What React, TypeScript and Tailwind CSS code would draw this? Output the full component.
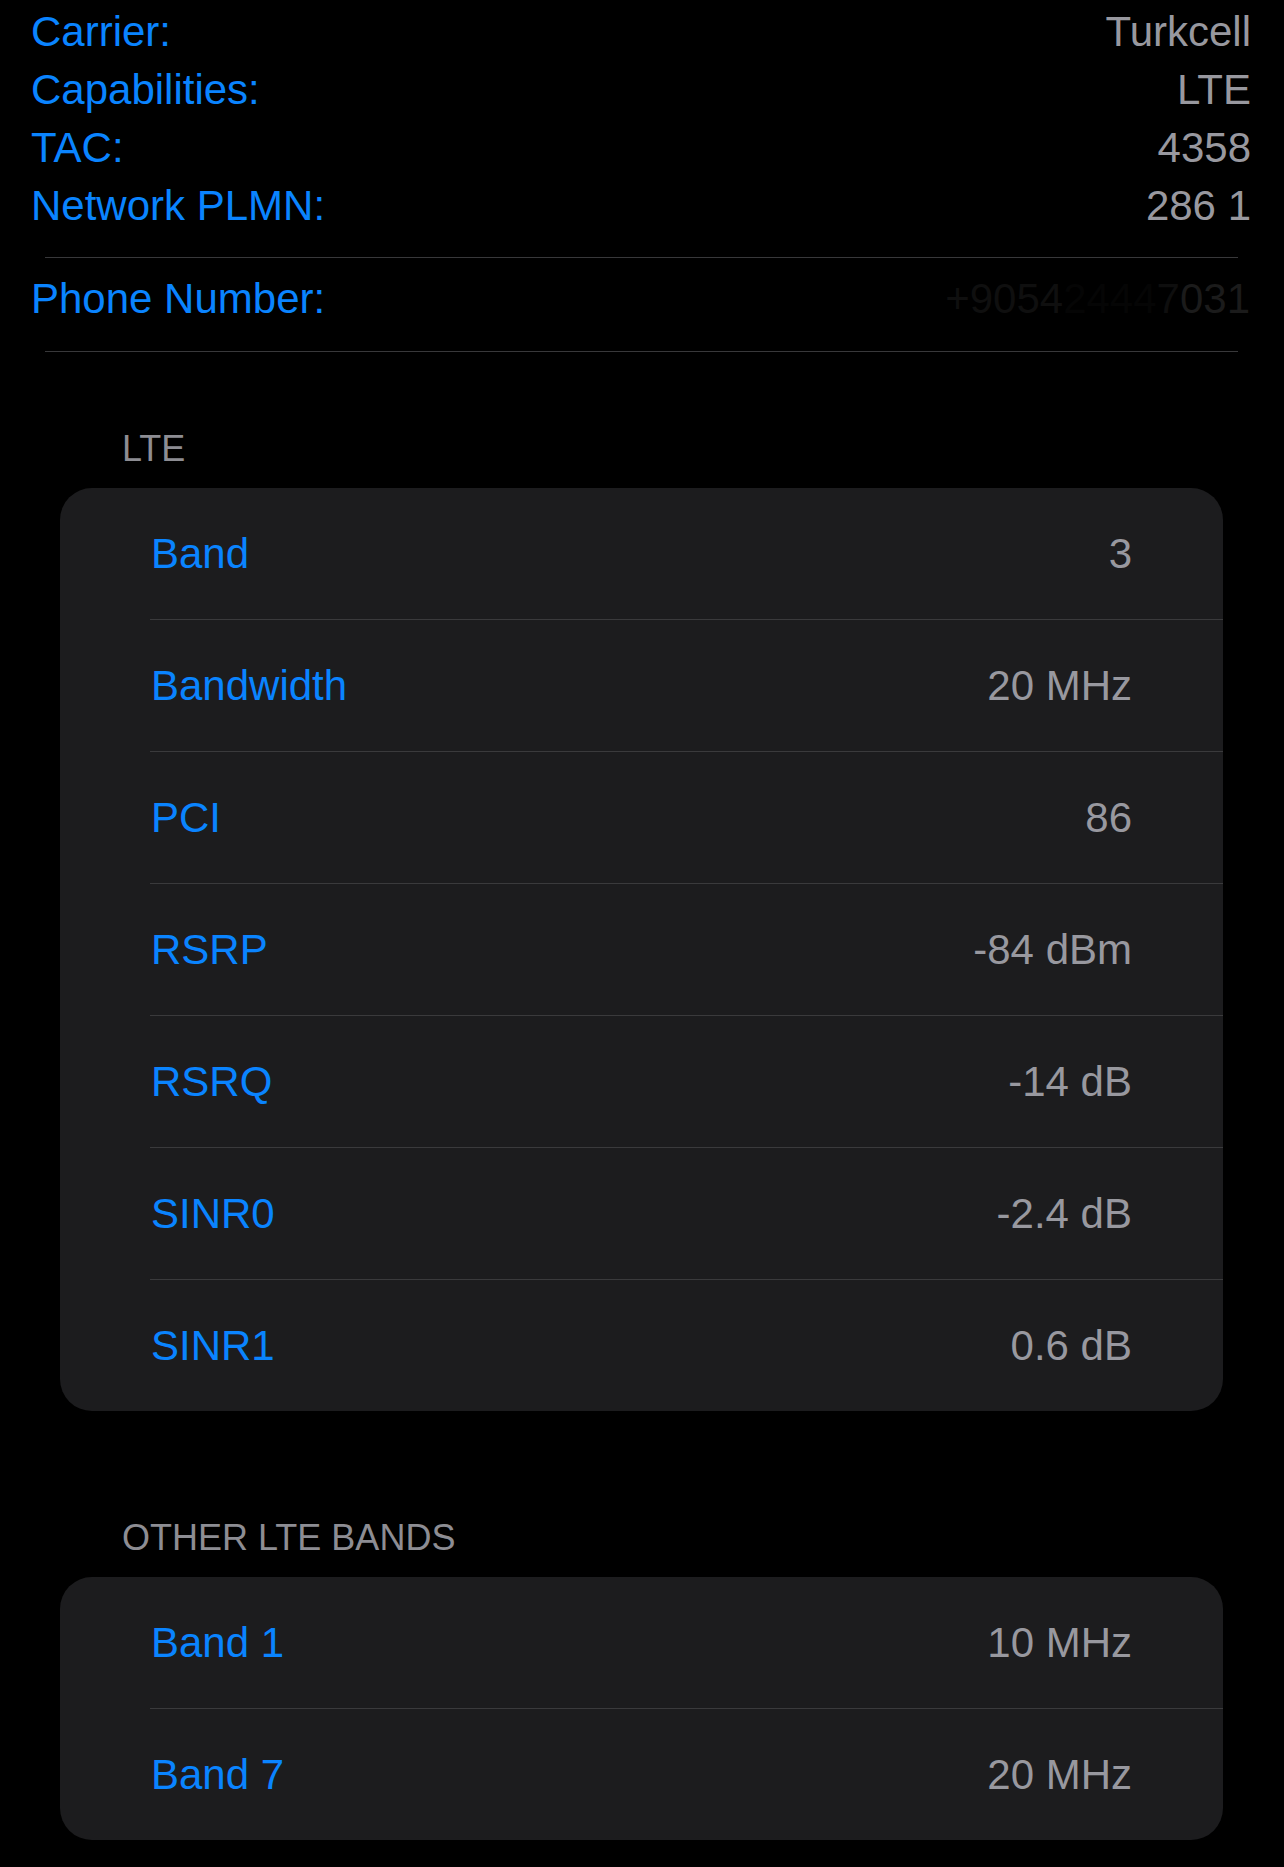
const info = [
  { label: 'Carrier:', value: 'Turkcell' },
  { label: 'Capabilities:', value: 'LTE' },
  { label: 'TAC:', value: '4358' },
  { label: 'Network PLMN:', value: '286 1' },
];

const lte = [
  { label: 'Band', value: '3' },
  { label: 'Bandwidth', value: '20 MHz' },
  { label: 'PCI', value: '86' },
  { label: 'RSRP', value: '-84 dBm' },
  { label: 'RSRQ', value: '-14 dB' },
  { label: 'SINR0', value: '-2.4 dB' },
  { label: 'SINR1', value: '0.6 dB' },
];

const otherBands = [
  { label: 'Band 1', value: '10 MHz' },
  { label: 'Band 7', value: '20 MHz' },
];

function InfoRow({ label, value }: { label: string; value: string }) {
  return (
    <div className="flex h-[58px] items-center justify-between leading-[58px]">
      <span className="text-[#0a84ff]">{label}</span>
      <span className="text-[#98989f]">{value}</span>
    </div>
  );
}

function Card({ rows }: { rows: { label: string; value: string }[] }) {
  return (
    <div className="ml-[60px] mr-[61px] overflow-hidden rounded-[32px] bg-[#1c1c1e]">
      <div className="ml-[90px]">
        {rows.map((row, i) => (
          <div key={row.label}>
            {i > 0 && <div className="h-px bg-[#3a3a3c]" />}
            <div className="flex h-[131px] items-center justify-between pr-[91px]">
              <span className="pl-px text-[#0a84ff]">{row.label}</span>
              <span className="text-[#98989f]">{row.value}</span>
            </div>
          </div>
        ))}
      </div>
    </div>
  );
}

function SectionHeader({ title }: { title: string }) {
  return (
    <div className="h-[44px] pl-[122px] text-[36px] leading-[44px] text-[#8d8d93]">{title}</div>
  );
}

export default function App() {
  return (
    <div
      className="min-h-[1867px] w-full bg-black text-[42px]"
      style={{ fontFamily: '"Liberation Sans", Arial, sans-serif' }}
    >
      <div className="pl-[31px] pr-[33px] pt-[3px]">
        {info.map((row) => (
          <InfoRow key={row.label} {...row} />
        ))}
        <div className="ml-[14px] mr-[13px] mt-[22px] h-px bg-[#38383a]" />
        <div className="mt-[12px] flex h-[58px] items-center justify-between leading-[58px]">
          <span className="text-[#0a84ff]">Phone Number:</span>
          <span className="pr-[1px]">
            <span className="text-[#0f0f0f]">+9054</span>
            <span className="text-[#050505]">2444</span>
            <span className="text-[#0e0e0e]">7</span>
            <span className="text-[#1b1b1b]">031</span>
          </span>
        </div>
        <div className="ml-[14px] mr-[13px] mt-[23px] h-px bg-[#38383a]" />
      </div>

      <div className="mt-[75px]">
        <SectionHeader title="LTE" />
        <div className="mt-[17px]">
          <Card rows={lte} />
        </div>
      </div>

      <div className="mt-[105px]">
        <SectionHeader title="OTHER LTE BANDS" />
        <div className="mt-[17px]">
          <Card rows={otherBands} />
        </div>
      </div>
    </div>
  );
}
